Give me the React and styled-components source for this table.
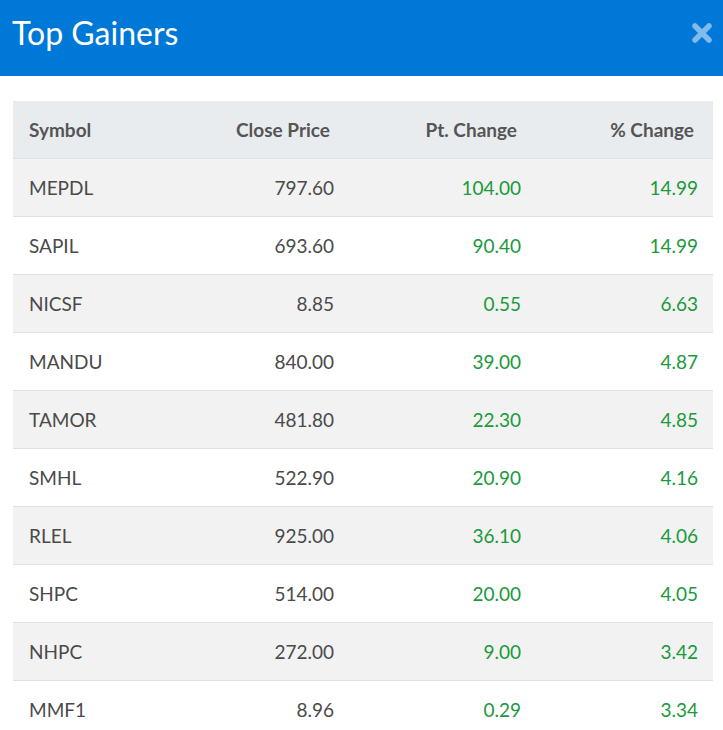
import React from "react";
import styled, { createGlobalStyle } from "styled-components";

const Global = createGlobalStyle`
  html, body { margin: 0; padding: 0; background: #fff; }
  body { font-family: Lato, "Noto Sans", sans-serif; }
`;

const Wrap = styled.div`
  width: 723px;
  min-height: 730px;
  background: #fff;
`;

const Header = styled.div`
  height: 76px;
  background: #0078d7;
  display: flex;
  align-items: center;
  justify-content: space-between;
  padding: 0 10px 0 12px;
  box-sizing: border-box;
`;

const Title = styled.h1`
  margin: 0;
  margin-top: -12px;
  font-size: 32px;
  font-weight: 400;
  color: #fff;
`;

const Close = styled.button`
  border: 0;
  background: none;
  padding: 0;
  margin-top: -10px;
  width: 22px;
  height: 22px;
  display: flex;
  cursor: pointer;
`;

const Body = styled.div`
  padding: 25px 10px 0 13px;
`;

const Row = styled.div`
  display: grid;
  grid-template-columns: 150px 186px 187px 177px;
  height: 57px;
  align-items: center;
  background: ${(p) => (p.$head ? "#e9ecef" : p.$striped ? "#f2f2f2" : "#fff")};
  border-bottom: ${(p) => (p.$last ? "none" : "1px solid #dee2e6")};
`;

const Cell = styled.div`
  font-size: 19px;
  padding: 0 ${(p) => (p.$head ? 19 : 15)}px 0 16px;
  text-align: ${(p) => (p.$right ? "right" : "left")};
  color: ${(p) => (p.$head ? "#555" : p.$green ? "#1a9a3c" : "#4a4a4a")};
  font-weight: ${(p) => (p.$head ? 700 : 400)};
`;

const data = [
  ["MEPDL", "797.60", "104.00", "14.99"],
  ["SAPIL", "693.60", "90.40", "14.99"],
  ["NICSF", "8.85", "0.55", "6.63"],
  ["MANDU", "840.00", "39.00", "4.87"],
  ["TAMOR", "481.80", "22.30", "4.85"],
  ["SMHL", "522.90", "20.90", "4.16"],
  ["RLEL", "925.00", "36.10", "4.06"],
  ["SHPC", "514.00", "20.00", "4.05"],
  ["NHPC", "272.00", "9.00", "3.42"],
  ["MMF1", "8.96", "0.29", "3.34"],
];

export default function App() {
  return (
    <Wrap>
      <Global />
      <Header>
        <Title>Top Gainers</Title>
        <Close aria-label="close">
          <svg width="22" height="22" viewBox="0 0 22 22">
            <path
              d="M4 4 L18 18 M18 4 L4 18"
              stroke="#80bbec"
              strokeWidth="5.5"
              strokeLinecap="round"
              fill="none"
            />
          </svg>
        </Close>
      </Header>
      <Body>
        <Row $head>
          <Cell $head>Symbol</Cell>
          <Cell $head $right>Close Price</Cell>
          <Cell $head $right>Pt. Change</Cell>
          <Cell $head $right>% Change</Cell>
        </Row>
        {data.map((r, i) => (
          <Row key={r[0]} $striped={i % 2 === 0} $last={i === data.length - 1}>
            <Cell>{r[0]}</Cell>
            <Cell $right>{r[1]}</Cell>
            <Cell $right $green>{r[2]}</Cell>
            <Cell $right $green>{r[3]}</Cell>
          </Row>
        ))}
      </Body>
    </Wrap>
  );
}
